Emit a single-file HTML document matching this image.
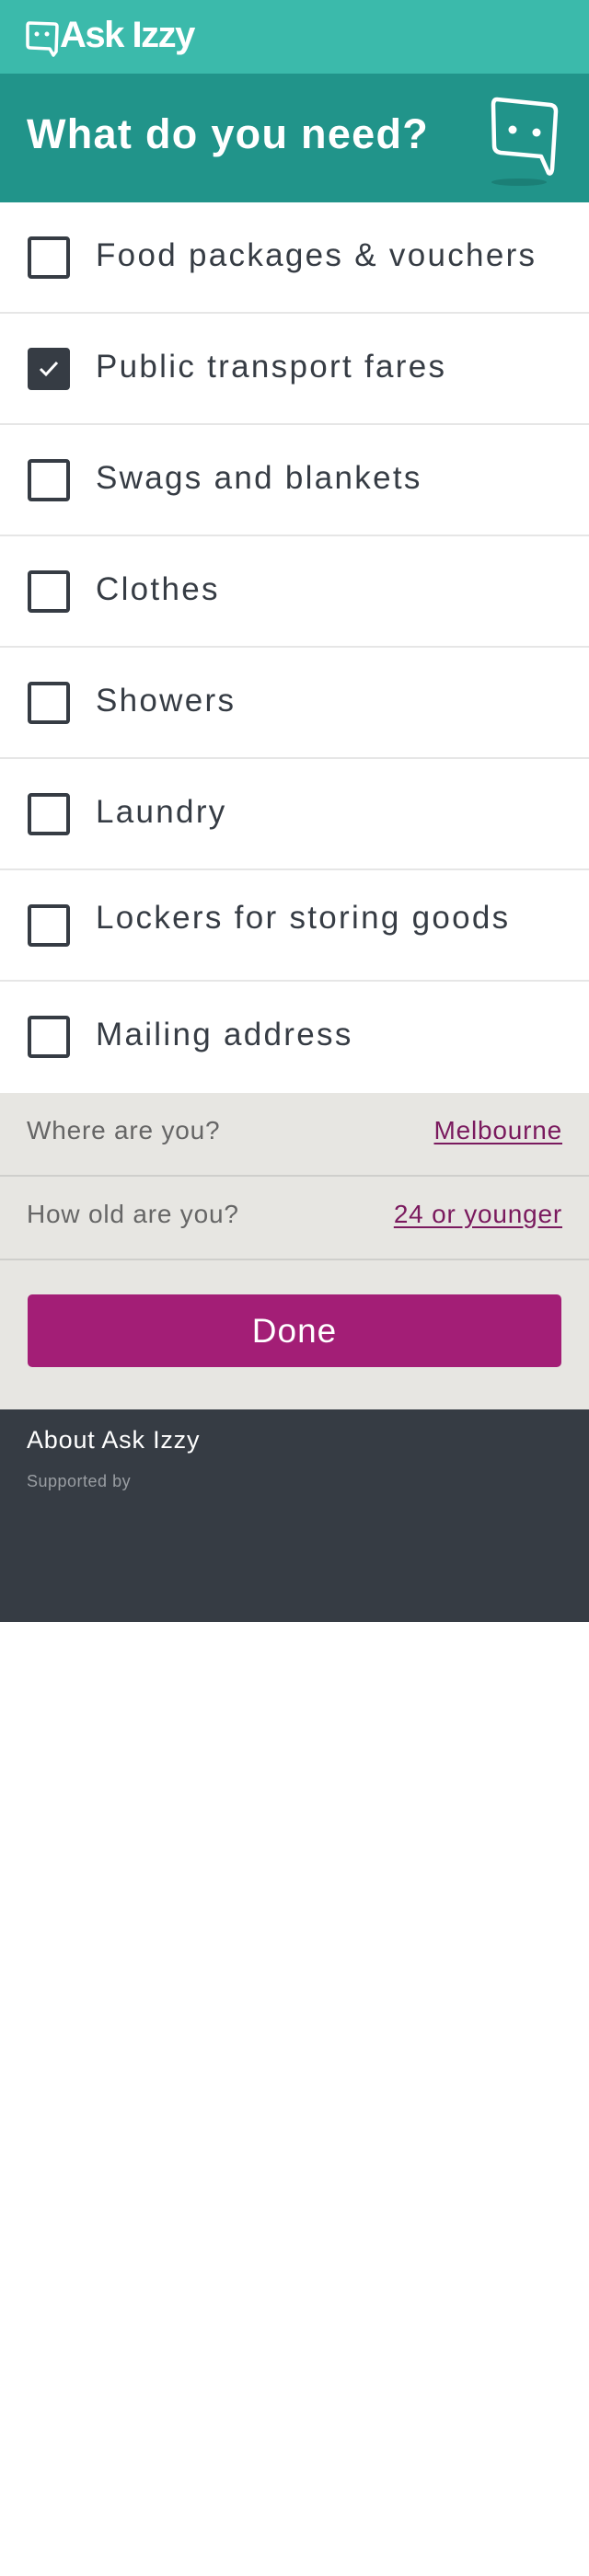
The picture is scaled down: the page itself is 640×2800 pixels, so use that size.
<!DOCTYPE html>
<html><head><meta charset="utf-8"><style>
*{margin:0;padding:0;box-sizing:border-box}
body{width:640px;height:2800px;background:#fff;font-family:"Liberation Sans",sans-serif;position:relative;overflow:hidden}
.hdr{position:absolute;left:0;top:0;width:640px;height:80px;background:#3bbaab}
.ban{position:absolute;left:0;top:80px;width:640px;height:140px;background:#21948a}
.ban h1{position:absolute;left:29px;top:40px;color:#fff;font-size:45px;font-weight:bold;letter-spacing:1.3px}
.item{position:absolute;left:0;width:640px;height:121px;border-bottom:2px solid #e6e6e6}
.cb{position:absolute;left:30px;top:37px;width:46px;height:46px;border:4px solid #363c44;border-radius:4px}
.cb.on{background:#363c44}
.lbl{position:absolute;left:104px;top:38px;font-size:35px;color:#363c44;letter-spacing:2.3px;white-space:nowrap}
.grey{position:absolute;left:0;top:1188px;width:640px;height:344px;background:#e7e6e2}
.row{position:absolute;left:0;width:640px;height:91px;border-bottom:2px solid #cfcfcc}
.row .q{position:absolute;left:29px;top:25px;font-size:28px;color:#666;letter-spacing:0.8px}
.row .a{position:absolute;right:29px;top:25px;font-size:28px;color:#7a1a5e;text-decoration:underline;text-underline-offset:4px;letter-spacing:0.8px}
.btn{position:absolute;left:30px;top:219px;width:580px;height:79px;background:#a31e76;border-radius:5px;color:#fff;font-size:37px;text-align:center;line-height:79px;letter-spacing:1px}
.ft{position:absolute;left:0;top:1532px;width:640px;height:231px;background:#363c44}
</style></head><body>
<div class="hdr">
<svg style="position:absolute;left:28px;top:22px" width="36" height="42" viewBox="0 0 36 42"><path d="M4 3 L31 4 Q34 4 34 7 L33 34 L30 38 L26 31 L5 30 Q2 30 2 27 L2 6 Q2 3 4 3 Z" fill="none" stroke="#fff" stroke-width="3.5" stroke-linejoin="round"/><circle cx="12" cy="15" r="2.5" fill="#fff"/><circle cx="23" cy="15" r="2.5" fill="#fff"/></svg>
<div style="position:absolute;left:65px;top:16px;color:#fff;font-size:40px;font-weight:bold;letter-spacing:-1.5px">Ask Izzy</div>
</div>
<div class="ban"><h1>What do you need?</h1>
<svg style="position:absolute;left:526px;top:24px" width="90" height="100" viewBox="0 0 90 100"><ellipse cx="38" cy="94" rx="30" ry="4" fill="#1b7f76"/><path d="M14 4 L72 10 Q78 11 78 17 L74 80 Q73 86 70 84 L62 66 L18 62 Q11 61 11 54 L10 10 Q10 4 14 4 Z" fill="none" stroke="#fff" stroke-width="4.5" stroke-linejoin="round"/><circle cx="31" cy="37" r="4.5" fill="#fff"/><circle cx="57" cy="40" r="4.5" fill="#fff"/></svg>
</div>
<div class="item" style="top:220px"><div class="cb"></div><div class="lbl">Food packages &amp; vouchers</div></div>
<div class="item" style="top:341px"><div class="cb on"><svg width="38" height="38" viewBox="0 0 38 38" style="position:absolute;left:0;top:0"><path d="M10 19 L16 25 L28 12" fill="none" stroke="#fff" stroke-width="3"/></svg></div><div class="lbl">Public transport fares</div></div>
<div class="item" style="top:462px"><div class="cb"></div><div class="lbl">Swags and blankets</div></div>
<div class="item" style="top:583px"><div class="cb"></div><div class="lbl">Clothes</div></div>
<div class="item" style="top:704px"><div class="cb"></div><div class="lbl">Showers</div></div>
<div class="item" style="top:825px"><div class="cb"></div><div class="lbl">Laundry</div></div>
<div class="item" style="top:946px"><div class="cb"></div><div class="lbl" style="top:32px">Lockers for storing goods</div></div>
<div class="item" style="top:1067px;border:none"><div class="cb"></div><div class="lbl">Mailing address</div></div>
<div class="grey">
<div class="row" style="top:0"><div class="q">Where are you?</div><div class="a">Melbourne</div></div>
<div class="row" style="top:91px"><div class="q">How old are you?</div><div class="a">24 or younger</div></div>
<div class="btn">Done</div>
</div>
<div class="ft">
<div style="position:absolute;left:29px;top:18px;color:#fff;font-size:27px;letter-spacing:0.8px">About Ask Izzy</div>
<div style="position:absolute;left:29px;top:68px;color:#9a9ea3;font-size:18px;letter-spacing:0.5px">Supported by</div>
</div>
</body></html>
